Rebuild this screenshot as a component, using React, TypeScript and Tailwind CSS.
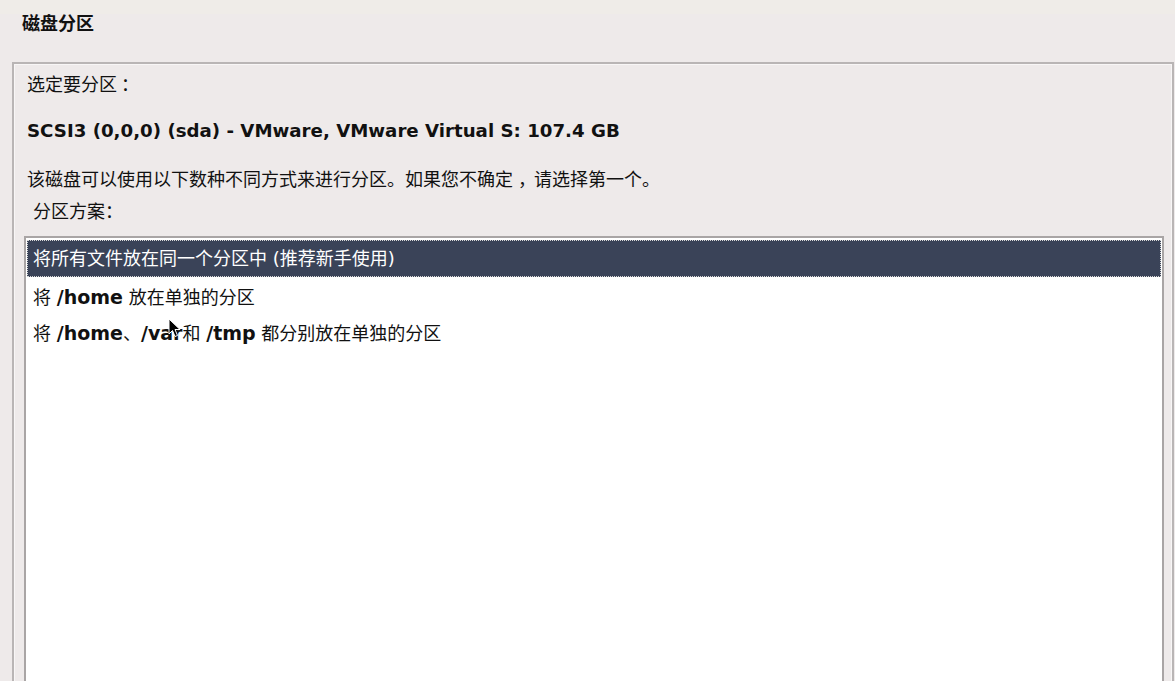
export default function App() {
  const font = { fontFamily: '"DejaVu Sans", "Noto Sans CJK SC", sans-serif' }
  return (
    <div
      className="w-[1175px] h-[681px] overflow-hidden bg-[#eeeaea] text-[#111] relative"
      style={font}
    >
      <div className="h-[14px] bg-[#efece8]" />
      <div className="pl-[22px] h-[48px]">
        <h1 className="text-[18px] font-bold leading-[20px]">磁盘分区</h1>
      </div>

      {/* outer frame */}
      <div className="ml-[12px] mr-[1px] h-[640px] border-t-2 border-l-2 border-r-2 border-[#b9b5b5]">
        <div className="h-full border-t border-l border-r border-[#f8f6f6] pl-[12px] pr-[7px]">
          <p className="pt-[9px] text-[18px] leading-[22px]">
            选定要分区<span className="ml-[4px]">：</span>
          </p>
          <p className="mt-[24px] text-[18.2px] font-bold leading-[22px]">
            SCSI3 (0,0,0) (sda) - VMware, VMware Virtual S: 107.4 GB
          </p>
          <p className="mt-[27px] text-[18px] leading-[22px]">
            该磁盘可以使用以下数种不同方式来进行分区。如果您不确定<span className="inline-block translate-x-[5px] mr-[3px]">，</span>请选择第一个。
          </p>
          <p className="mt-[10px] pl-[6px] text-[18px] leading-[22px]">分区方案：</p>

          <div className="mt-[13px] ml-[-3px] h-[460px] bg-white border-t-2 border-l-2 border-r-2 border-[#a9a5a5] pt-[2px] px-[1px]">
            <div className="h-[37px] bg-[#3a4358] text-white border border-dotted border-[#d8d8d8] flex items-center pl-[5px] text-[18px]">
              将所有文件放在同一个分区中 (推荐新手使用)
            </div>
            <div className="h-[38px] pt-[2px] flex items-center pl-[6px] text-[18px]">
              将&nbsp;<span className="font-bold text-[19px]">/home</span>&nbsp;放在单独的分区
            </div>
            <div className="h-[37px] flex items-center pl-[6px] text-[18px]">
              将&nbsp;<span className="font-bold text-[19px]">/home</span>、<span className="font-bold text-[19px]">/var</span>和&nbsp;
              <span className="font-bold text-[19px]">/tmp</span>&nbsp;都分别放在单独的分区
            </div>
          </div>
        </div>
      </div>

      {/* mouse pointer */}
      <svg
        className="absolute left-[168px] top-[318px]"
        width="14"
        height="20"
        viewBox="0 0 14 20"
      >
        <path d="M1 1 L1 16 L4.5 12.5 L7 18.5 L9.5 17.5 L7 11.5 L12 11.5 Z" fill="#000" stroke="#fff" strokeWidth="1" />
      </svg>
    </div>
  )
}
